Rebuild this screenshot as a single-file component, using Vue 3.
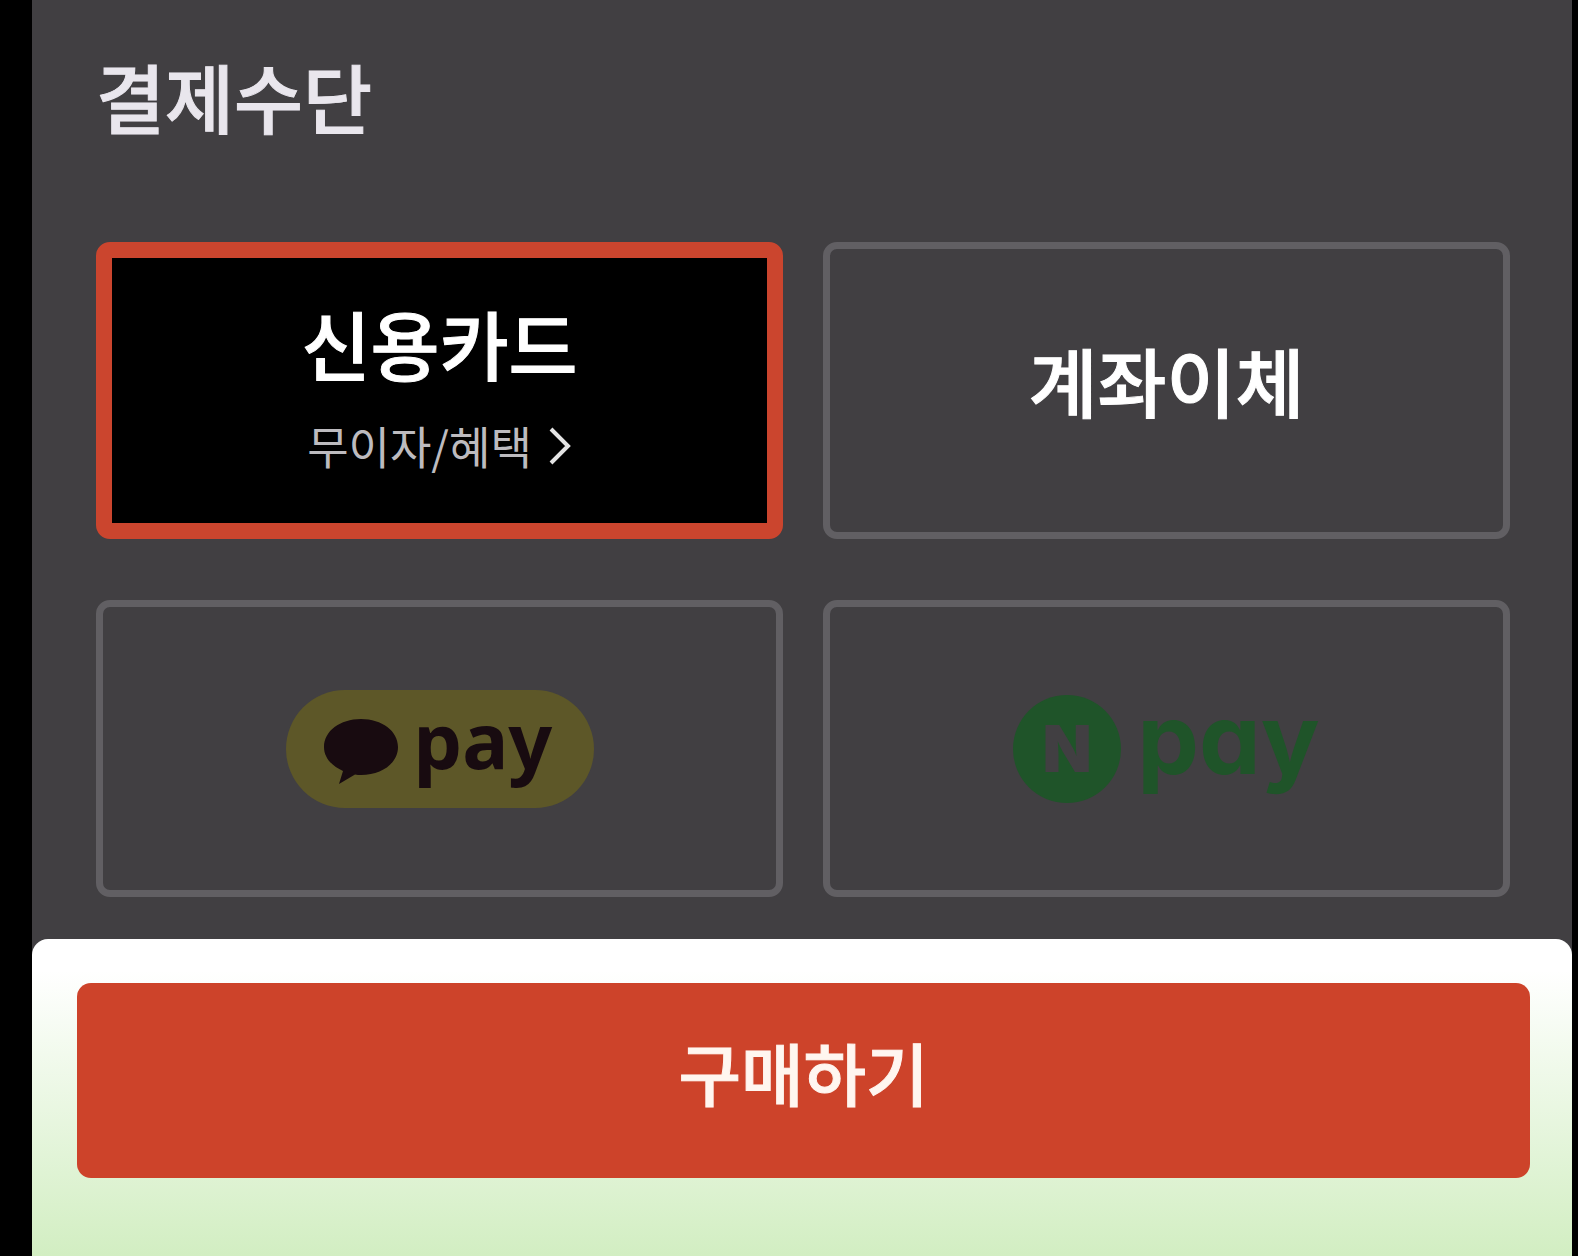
<script setup>
import { ref } from 'vue'

const method = ref('card')
const methods = [
  { id: 'card', label: '신용카드' },
  { id: 'transfer', label: '계좌이체' },
  { id: 'kakao', label: 'kakao pay' },
  { id: 'naver', label: 'N pay' },
]
</script>

<template>
  <main class="screen">
    <form class="checkout" @submit.prevent>
      <section class="payment">
        <h1 id="payment-title" class="title">결제수단</h1>
        <div class="grid" role="radiogroup" aria-labelledby="payment-title">
          <div
            v-for="m in methods"
            :key="m.id"
            class="option"
            :class="{ selected: method === m.id }"
          >
            <input :id="m.id" v-model="method" class="radio" type="radio" name="method" :value="m.id" />
            <label v-if="m.id === 'kakao'" :for="m.id" class="kakao">
              <svg class="bubble" viewBox="0 0 74 66" aria-hidden="true">
                <path d="M37 0C16 0 0 12 0 28c0 11 8 19 19 24L15 65l16-9.500c2 .5 4 .5 6 .5 21 0 37-12 37-28S58 0 37 0z" />
              </svg>
              <span>pay</span>
            </label>
            <label v-else-if="m.id === 'naver'" :for="m.id" class="naver">
              <span class="circle">N</span>
              <span>pay</span>
            </label>
            <label v-else :for="m.id" class="name">{{ m.label }}</label>
            <a v-if="m.id === 'card'" class="benefit" href="#benefit">
              무이자/혜택
              <svg class="chevron" viewBox="0 0 24 40" aria-hidden="true">
                <path d="M3 3l17 17L3 37" />
              </svg>
            </a>
          </div>
        </div>
      </section>
      <footer class="sheet">
        <button class="buy" type="submit">구매하기</button>
      </footer>
    </form>
  </main>
</template>

<style>
body {
  background: #000;
}
</style>

<style scoped>
.screen {
  box-sizing: border-box;
  min-height: 100vh;
  padding: 0 6px 0 32px;
  display: flex;
  font-family: "Noto Sans CJK KR", sans-serif;
  color: #fff;
}
.checkout {
  flex: 1;
  display: flex;
  flex-direction: column;
  background: #413f42;
}
.payment {
  padding: 42px 62px 42px 64px;
}
.title {
  margin: 0 0 92px;
  font-size: 75px;
  line-height: 108px;
  font-weight: 500;
  color: #e9e6ed;
  -webkit-text-stroke: 1px currentColor;
}
.grid {
  display: grid;
  grid-template-columns: 1fr 1fr;
  gap: 61px 40px;
}
.option {
  box-sizing: border-box;
  position: relative;
  min-height: 297px;
  display: flex;
  flex-direction: column;
  align-items: center;
  justify-content: center;
  border: 7px solid #615f63;
  border-radius: 14px;
}
.option.selected {
  border: 16px solid #cb452e;
  background: #000;
}
.radio {
  position: absolute;
  inset: 0;
  width: 100%;
  height: 100%;
  margin: 0;
  opacity: 0;
  cursor: pointer;
}
.name {
  padding-bottom: 22px;
  font-size: 75px;
  line-height: 108px;
  font-weight: 500;
  -webkit-text-stroke: 1px currentColor;
}
.benefit {
  position: relative;
  display: flex;
  align-items: center;
  gap: 16px;
  margin-top: -6px;
  padding-bottom: 14px;
  font-size: 45px;
  line-height: 66px;
  color: #bdbbbf;
  text-decoration: none;
}
.chevron {
  width: 24px;
  height: 40px;
  fill: none;
  stroke: #e4e4e4;
  stroke-width: 4;
}
.kakao {
  box-sizing: border-box;
  width: 308px;
  height: 118px;
  padding: 0 38px;
  display: flex;
  align-items: center;
  gap: 16px;
  border-radius: 60px;
  background: #5d5728;
  color: #180b10;
  font: 700 77px/104px "Noto Sans", sans-serif;
}
.kakao span {
  padding-bottom: 18px;
}
.bubble {
  width: 74px;
  height: 66px;
  padding-top: 6px;
  flex: none;
  fill: currentColor;
}
.naver {
  display: flex;
  align-items: center;
  gap: 16px;
  color: #1f5429;
  font: 700 98px/108px Inter, sans-serif;
  font-feature-settings: "cv11";
}
.naver span:last-child {
  padding-bottom: 20px;
}
.circle {
  width: 108px;
  height: 108px;
  border-radius: 50%;
  background: #1f5429;
  color: #413f42;
  font-size: 64px;
  font-weight: 900;
  text-align: center;
}
.sheet {
  flex: 1;
  padding: 44px 42px 78px 45px;
  border-radius: 16px 16px 0 0;
  background: linear-gradient(#fff 10%, #d2eec2);
}
.buy {
  width: 100%;
  height: 195px;
  padding: 0 0 18px;
  border: 0;
  border-radius: 14px;
  background: #cd432a;
  color: #fff6f0;
  font: 500 68px/100px "Noto Sans CJK KR", sans-serif;
  -webkit-text-stroke: 1px currentColor;
  cursor: pointer;
}
</style>
